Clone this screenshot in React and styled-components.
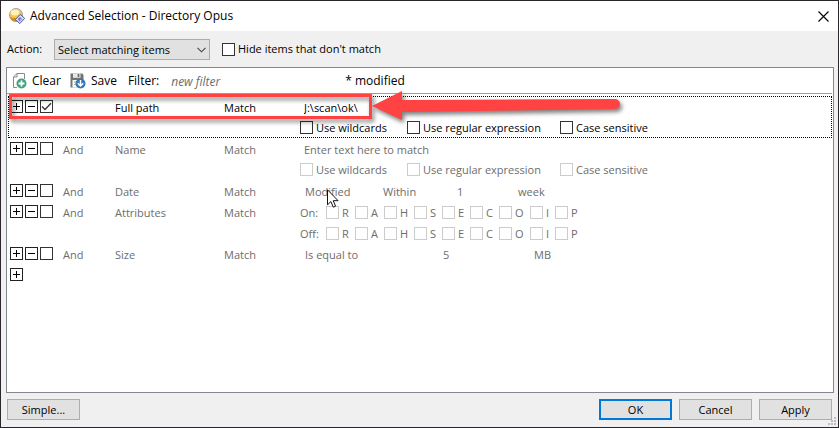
import React, { useState } from "react";
import styled, { createGlobalStyle } from "styled-components";

const colors = {
  face: "#f0f0f0",
  text: "#000",
  muted: "#6d6d6d",
  edge: "#828790",
  button: "#e1e1e1",
  buttonEdge: "#adadad",
  accent: "#0078d7",
  red: "#ff4343",
};

const GlobalStyle = createGlobalStyle`
  * {
    box-sizing: border-box;
  }
  body {
    margin: 0;
  }
  body, button, input, select {
    font-family: "Open Sans", "Noto Sans", sans-serif;
    font-size: 11px;
    color: ${colors.text};
  }
`;

const Window = styled.div`
  position: relative;
  display: flex;
  flex-direction: column;
  min-height: 100vh;
  border: 1px solid #2a272c;
  background: ${colors.face};
  line-height: 16px;
`;

const TitleBar = styled.header`
  display: flex;
  align-items: center;
  gap: 5px;
  height: 30px;
  padding: 0 9px 0 8px;
  background: #fff;
`;

const Title = styled.h1`
  flex: 1;
  margin: 0;
  font-size: 12px;
  font-weight: 400;
`;

const IconButton = styled.button`
  display: flex;
  align-items: center;
  gap: 5px;
  padding: 0;
  border: 0;
  background: none;
`;

const ActionBar = styled.div`
  display: flex;
  align-items: center;
  height: 36px;
  padding-left: 6px;
`;

const ActionLabel = styled.label`
  width: 47px;
`;

const SelectWrap = styled.div`
  position: relative;
  width: 156px;
  margin-right: 12px;
`;

const Select = styled.select`
  display: block;
  appearance: none;
  width: 100%;
  height: 21px;
  padding: 0 3px;
  border: 1px solid ${colors.buttonEdge};
  border-radius: 0;
  background: ${colors.button};
`;

const SelectArrow = styled.svg`
  position: absolute;
  top: 8px;
  right: 4px;
  pointer-events: none;
`;

const Check = styled.label`
  display: flex;
  align-items: center;
  gap: 3px;
  white-space: nowrap;
  color: ${props => (props.$muted ? colors.muted : colors.text)};
`;

const Box = styled.input`
  appearance: none;
  flex: none;
  width: 13px;
  height: 13px;
  margin: 0;
  border: 1px solid ${props => (props.disabled ? "#ccc" : "#333")};
  background: #fff;
  &:checked {
    background: #fff
      url("data:image/svg+xml,%3Csvg xmlns='http://www.w3.org/2000/svg' viewBox='0 0 11 11'%3E%3Cpath d='M1 5.5 4 8.5 10 2.2' fill='none' stroke='%23333' stroke-width='1.3'/%3E%3C/svg%3E");
  }
`;

const Panel = styled.main`
  flex: 1;
  margin: 0 4px 0 5px;
  border: 1px solid ${colors.edge};
  background: #fff;
`;

const Toolbar = styled.div`
  display: flex;
  align-items: center;
  height: 26px;
  margin-right: 1px;
  padding-left: 5px;
  border-bottom: 1px solid #a0a0a0;
  font-size: 12px;
  button, input {
    font-size: 12px;
  }
`;

const ToolButton = styled(IconButton)`
  margin-right: 9px;
`;

const FilterLabel = styled.label`
  margin: 0 8px 0 2px;
`;

const FilterInput = styled.input`
  width: 178px;
  padding: 2px 4px 0;
  border: 0;
  background: none;
  font-style: italic;
  &::placeholder {
    color: ${colors.muted};
    opacity: 1;
  }
`;

const Rules = styled.div`
  position: relative;
  margin: 2px 1px 0;
`;

const Rule = styled.section`
  display: grid;
  grid-template-columns: 53px 52px 109px 76px 1fr;
  grid-auto-rows: 21px;
  align-items: center;
  padding-left: 2px;
  color: ${props => (props.$active ? colors.text : colors.muted)};
  outline: ${props => (props.$active ? "1px dotted #000" : "none")};
  outline-offset: -1px;
`;

const RuleButtons = styled.div`
  display: flex;
  gap: 2px;
`;

const SquareButton = styled.button`
  display: flex;
  align-items: center;
  justify-content: center;
  width: 13px;
  height: 13px;
  padding: 0;
  border: 1px solid #222;
  background: #fff;
`;

const Cell = styled.span`
  padding-top: 2px;
`;

const TextInput = styled.input`
  width: 200px;
  padding: 2px 4px 0;
  border: 0;
  background: none;
  &::placeholder {
    color: ${colors.muted};
    opacity: 1;
  }
`;

const Options = styled.div`
  display: grid;
  grid-column: 5;
  grid-template-columns: 107px 153px auto;
  justify-content: start;
`;

const Values = styled.div`
  display: grid;
  grid-template-columns: ${props => props.$columns};
  padding: 2px 0 0 5px;
`;

const Flags = styled.div`
  display: grid;
  grid-column: 5;
  grid-template-columns: 26px 29px 29px 30px 28px 28px 29px 31px 25px auto;
  justify-content: start;
  padding-top: 2px;
`;

const Footer = styled.footer`
  display: flex;
  gap: 7px;
  height: 34px;
  padding: 6px 6px 0;
`;

const DialogButton = styled.button`
  width: 73px;
  height: 21px;
  padding: 0;
  border: ${props => (props.$primary ? `2px solid ${colors.accent}` : `1px solid ${colors.buttonEdge}`)};
  background: ${colors.button};
`;

const Spacer = styled.div`
  flex: 1;
`;

const Grip = styled.svg`
  position: absolute;
  right: 2px;
  bottom: 2px;
`;

const Highlight = styled.svg`
  position: absolute;
  top: -6px;
  left: 0;
  pointer-events: none;
  filter: drop-shadow(2px 3px 2px rgba(0, 0, 0, 0.5));
`;

const Pointer = styled.svg`
  position: absolute;
  top: 93px;
  left: 319px;
  pointer-events: none;
`;

const AppIcon = () => (
  <svg width="16" height="16" viewBox="0 0 16 16">
    <circle cx="7" cy="7" r="6.6" fill="#f3c64f" stroke="#9a86a0" strokeWidth="0.7" />
    <path d="M1 9a6.4 6.4 0 0 0 7 4.5L13 8C9 10 5 11 1 9z" fill="#d58d25" />
    <ellipse cx="6" cy="4.6" rx="4.3" ry="3" fill="#fff2b8" />
    <path d="M11.2 6.4 15.7 10.3 10.8 15.6 6.3 11.6z" fill="#d8ddf5" stroke="#535b96" />
    <path d="M10.8 9 13 11 10.8 13.2 8.8 11.3z" fill="#5967ad" />
    <path d="M10.8 10.3 12 11.2 10.8 12.3z" fill="#fff" />
  </svg>
);

const ClearIcon = () => (
  <svg width="15" height="17" viewBox="0 0 15 17">
    <path d="M5 15.5H1.5V4.8L5 1.5h7.5V7" fill="#fff" stroke="#8a8a8a" />
    <path d="M1.5 5H5V1.5" fill="none" stroke="#8a8a8a" />
    <circle cx="9.5" cy="11.5" r="5" fill="#41a37c" />
    <path d="M9.5 8.5v6M6.5 11.5h6" stroke="#fff" strokeWidth="1.8" />
  </svg>
);

const SaveIcon = () => (
  <svg width="16" height="17" viewBox="0 0 16 17">
    <path d="M.5 1.5h11.8L13.5 3v12.5H.5z" fill="#747474" />
    <path d="M3 1.5h7.5v4.3H3z" fill="#e8e8e8" />
    <path d="M7.7 2h1.6v3H7.7z" fill="#666" />
    <path d="M2.5 8h9v7.5h-9z" fill="#fff" />
    <path d="M4 10h4M4 12.5h3" stroke="#aaa" />
    <circle cx="10.5" cy="11.5" r="5" fill="#3478bb" />
    <path d="M10.5 8v6M7.8 11.2l2.7 2.8 2.7-2.8" fill="none" stroke="#fff" strokeWidth="1.5" />
  </svg>
);

const PlusMinus = ({ plus }) => (
  <svg width="9" height="9" viewBox="0 0 9 9" shapeRendering="crispEdges">
    <path d={plus ? "M1 4.5h7M4.5 1v7" : "M1 4.5h7"} stroke="#000" />
  </svg>
);

const Checkbox = ({ label, muted }) => (
  <Check $muted={muted}>
    <Box type="checkbox" disabled={muted} />
    {label}
  </Check>
);

const MatchOptions = ({ muted }) => (
  <Options>
    <Checkbox label="Use wildcards" muted={muted} />
    <Checkbox label="Use regular expression" muted={muted} />
    <Checkbox label="Case sensitive" muted={muted} />
  </Options>
);

const AttributeFlags = ({ label }) => (
  <Flags role="group" aria-label={label}>
    <span>{label}:</span>
    {["R", "A", "H", "S", "E", "C", "O", "I", "P"].map(flag => (
      <Checkbox key={flag} label={flag} muted />
    ))}
  </Flags>
);

const RuleRow = ({ field, first, children }) => {
  const [enabled, setEnabled] = useState(Boolean(first));

  return (
    <Rule $active={first}>
      <RuleButtons>
        <SquareButton aria-label="Add rule"><PlusMinus plus /></SquareButton>
        <SquareButton aria-label="Remove rule"><PlusMinus /></SquareButton>
        <Box
          type="checkbox"
          aria-label={`Enable ${field}`}
          checked={enabled}
          onChange={e => setEnabled(e.target.checked)}
        />
      </RuleButtons>
      <Cell>{first ? "" : "And"}</Cell>
      <Cell>{field}</Cell>
      <Cell>Match</Cell>
      {children}
    </Rule>
  );
};

const App = () => {
  const [path, setPath] = useState("J:\\scan\\ok\\");

  return (
    <Window>
      <GlobalStyle />
      <TitleBar>
        <AppIcon />
        <Title>Advanced Selection - Directory Opus</Title>
        <IconButton aria-label="Close">
          <svg width="11" height="11" viewBox="0 0 11 11">
            <path d="M.5.5l10 10M10.5.5l-10 10" stroke="#000" strokeWidth="1.1" />
          </svg>
        </IconButton>
      </TitleBar>

      <ActionBar>
        <ActionLabel htmlFor="action">Action:</ActionLabel>
        <SelectWrap>
          <Select id="action">
            <option>Select matching items</option>
          </Select>
          <SelectArrow width="9" height="6" viewBox="0 0 9 6">
            <path d="M.5.8l4 4 4-4" fill="none" stroke="#444" strokeWidth="1.1" />
          </SelectArrow>
        </SelectWrap>
        <Checkbox label="Hide items that don't match" />
      </ActionBar>

      <Panel>
        <Toolbar>
          <ToolButton><ClearIcon />Clear</ToolButton>
          <ToolButton><SaveIcon />Save</ToolButton>
          <FilterLabel htmlFor="filter">Filter:</FilterLabel>
          <FilterInput id="filter" placeholder="new filter" />
          <span>* modified</span>
        </Toolbar>

        <Rules>
          <RuleRow field="Full path" first>
            <TextInput aria-label="Full path" value={path} onChange={e => setPath(e.target.value)} />
            <MatchOptions />
          </RuleRow>
          <RuleRow field="Name">
            <TextInput aria-label="Name" placeholder="Enter text here to match" />
            <MatchOptions muted />
          </RuleRow>
          <RuleRow field="Date">
            <Values $columns="78px 74px 61px auto">
              <span>Modified</span>
              <span>Within</span>
              <span>1</span>
              <span>week</span>
            </Values>
          </RuleRow>
          <RuleRow field="Attributes">
            <AttributeFlags label="On" />
            <AttributeFlags label="Off" />
          </RuleRow>
          <RuleRow field="Size">
            <Values $columns="138px 91px auto">
              <span>Is equal to</span>
              <span>5</span>
              <span>MB</span>
            </Values>
          </RuleRow>
          <Rule>
            <SquareButton aria-label="Add rule"><PlusMinus plus /></SquareButton>
          </Rule>

          <Highlight width="624" height="44" viewBox="0 0 624 44">
            <rect x="2.5" y="5.5" width="360" height="22" fill="none" stroke={colors.red} strokeWidth="3" />
            <path d="M364 16 394 1V10L607 9a5 5 0 0 1 0 10L394 22V30z" fill={colors.red} />
          </Highlight>
          <Pointer width="12" height="19" viewBox="0 0 12 19">
            <path d="M.5.8v15l3.4-3.2 2.4 5.6 2.3-1-2.4-5.5h4.9z" fill="#fff" stroke="#111" />
          </Pointer>
        </Rules>
      </Panel>

      <Footer>
        <DialogButton>Simple...</DialogButton>
        <Spacer />
        <DialogButton $primary>OK</DialogButton>
        <DialogButton>Cancel</DialogButton>
        <DialogButton>Apply</DialogButton>
      </Footer>
      <Grip width="8" height="8" viewBox="0 0 8 8" shapeRendering="crispEdges">
        <path d="M6 0h2v2H6zM3 3h2v2H3zM6 3h2v2H6zM0 6h2v2H0zM3 6h2v2H3zM6 6h2v2H6z" fill="#bdbdbd" />
      </Grip>
    </Window>
  );
};

export default App;
